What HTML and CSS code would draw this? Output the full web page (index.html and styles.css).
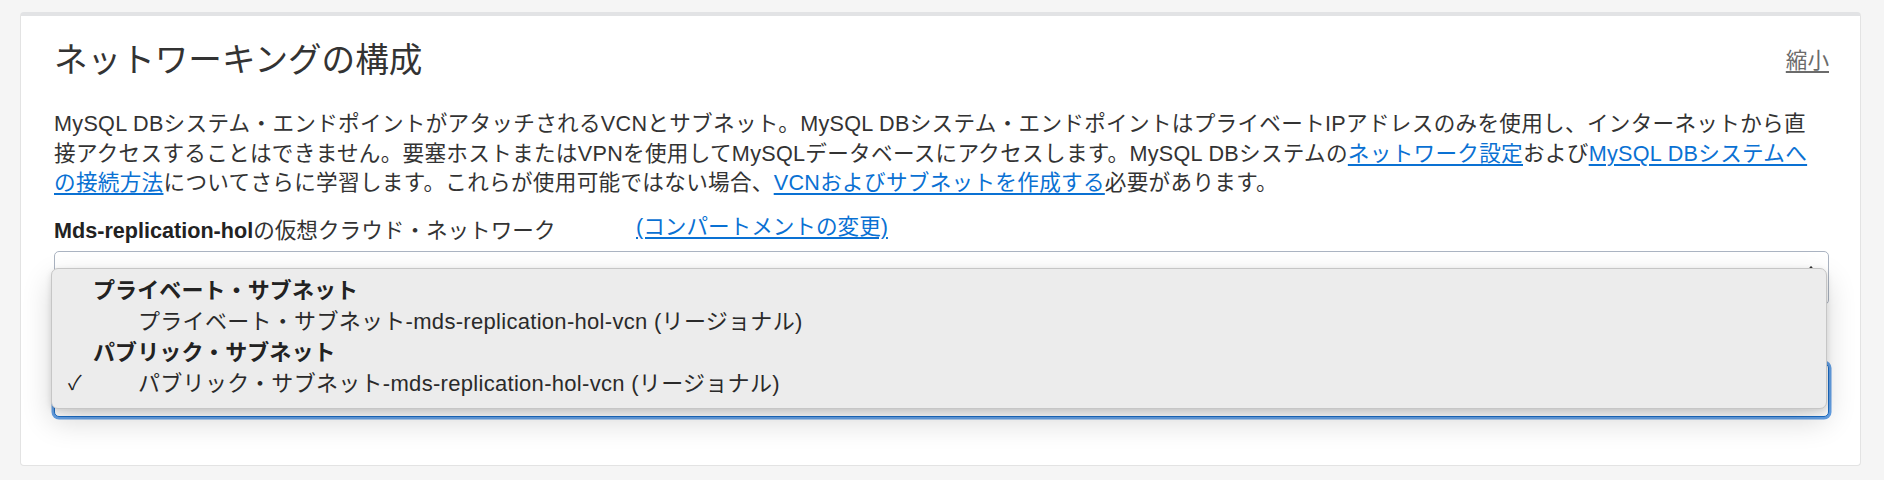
FILE: index.html
```html
<!DOCTYPE html>
<html lang="ja">
<head>
<meta charset="utf-8">
<title>ネットワーキングの構成</title>
<link rel="stylesheet" href="styles.css">
</head>
<body>
<section class="panel">
  <div class="head">
    <h2 class="title">ネットワーキングの構成</h2>
    <a class="collapse" href="#">縮小</a>
  </div>
  <p class="desc">
    <span class="line">MySQL DBシステム・エンドポイントがアタッチされるVCNとサブネット。MySQL DBシステム・エンドポイントはプライベートIPアドレスのみを使用し、インターネットから直</span><br>
    <span class="line">接アクセスすることはできません。要塞ホストまたはVPNを使用してMySQLデータベースにアクセスします。MySQL DBシステムの<a href="#">ネットワーク設定</a>および<a href="#">MySQL DBシステムへ</a></span><br>
    <span class="line"><a href="#">の接続方法</a>についてさらに学習します。これらが使用可能ではない場合、<a href="#">VCNおよびサブネットを作成する</a>必要があります。</span>
  </p>
  <div class="field-head">
    <label class="label"><b>Mds-replication-hol</b>の仮想クラウド・ネットワーク</label>
    <a class="change" href="#">(コンパートメントの変更)</a>
  </div>
  <div class="select vcn">
    <svg class="arrows" width="10" height="20" viewBox="0 0 10 20"><path d="M2 7 L5 3 L8 7 M2 13 L5 17 L8 13" fill="none" stroke="#333" stroke-width="1.6" stroke-linecap="round" stroke-linejoin="round"/></svg>
  </div>
  <div class="select subnet focus"></div>

  <div class="menu">
    <div class="group">プライベート・サブネット</div>
    <div class="opt"><span class="check"></span><span>プライベート・サブネット-mds-replication-hol-vcn (リージョナル)</span></div>
    <div class="group">パブリック・サブネット</div>
    <div class="opt"><span class="check">✓</span><span>パブリック・サブネット-mds-replication-hol-vcn (リージョナル)</span></div>
  </div>
</section>
</body>
</html>
```

FILE: styles.css
```css
html, body {
  margin: 0;
  padding: 0;
}
body {
  background: #f5f5f5;
  font-family: "Liberation Sans", "Noto Sans CJK JP", sans-serif;
  color: #333;
  width: 1884px;
  height: 480px;
  overflow: hidden;
}
.panel {
  position: relative;
  box-sizing: border-box;
  margin: 12px 0 0 20px;
  width: 1841px;
  height: 454px;
  background: #fff;
  border: 1px solid #e3e3e3;
  border-top: 4px solid #e2e3e5;
  border-radius: 4px;
  padding: 25px 31px 0 33px;
}
.head {
  display: flex;
  justify-content: space-between;
  align-items: center;
  height: 40px;
}
.title {
  margin: 0;
  font-size: 33.6px;
  line-height: 40px;
  font-weight: 400;
  color: #333;
}
.collapse {
  font-size: 21.6px;
  line-height: 30px;
  color: #6b6b6b;
  text-decoration: underline;
  text-underline-offset: 3px;
}
.desc {
  margin: 28px 0 0 0;
  font-size: 21.6px;
  line-height: 29.5px;
  letter-spacing: 0.3px;
  color: #333;
}
.desc .line {
  white-space: nowrap;
}
.desc a, .change {
  color: #0a71d3;
  text-decoration: underline;
  text-underline-offset: 3px;
}
.field-head {
  display: flex;
  align-items: flex-start;
  margin-top: 18px;
  font-size: 21.6px;
  line-height: 30px;
}
.label {
  width: 582px;
  color: #333;
}
.label b {
  font-weight: 700;
  color: #222;
}
.change {
  margin-top: -4px;
}
.select {
  box-sizing: border-box;
  height: 54px;
  border: 1px solid #aab3c1;
  border-radius: 5px;
  background: #fff;
  position: relative;
}
.vcn {
  margin-top: 5px;
  display: flex;
  justify-content: flex-end;
  align-items: flex-start;
  padding: 12px 12px 0 0;
}
.subnet {
  margin-top: 58px;
}
.focus {
  border-color: #1b6dc6;
  box-shadow: 0 0 0 2.5px rgba(74, 144, 226, 0.85);
}
.menu {
  position: absolute;
  left: 30px;
  top: 252px;
  width: 1776px;
  height: 141px;
  box-sizing: border-box;
  padding-top: 6px;
  background: #ececec;
  border: 1px solid #c6c6c6;
  border-radius: 7px;
  box-shadow: 0 12px 30px rgba(0, 0, 0, 0.16), 0 2px 6px rgba(0, 0, 0, 0.12);
  font-size: 22px;
  line-height: 31px;
  color: #2a2a2a;
}
.group {
  padding-left: 41px;
  font-weight: 700;
  color: #222;
  letter-spacing: 0.1px;
}
.opt {
  display: flex;
  align-items: center;
  white-space: nowrap;
  letter-spacing: 0.3px;
}
.opt .check {
  width: 86px;
  box-sizing: border-box;
  padding-left: 16px;
  font-size: 20px;
  color: #222;
  letter-spacing: 0;
}
```
